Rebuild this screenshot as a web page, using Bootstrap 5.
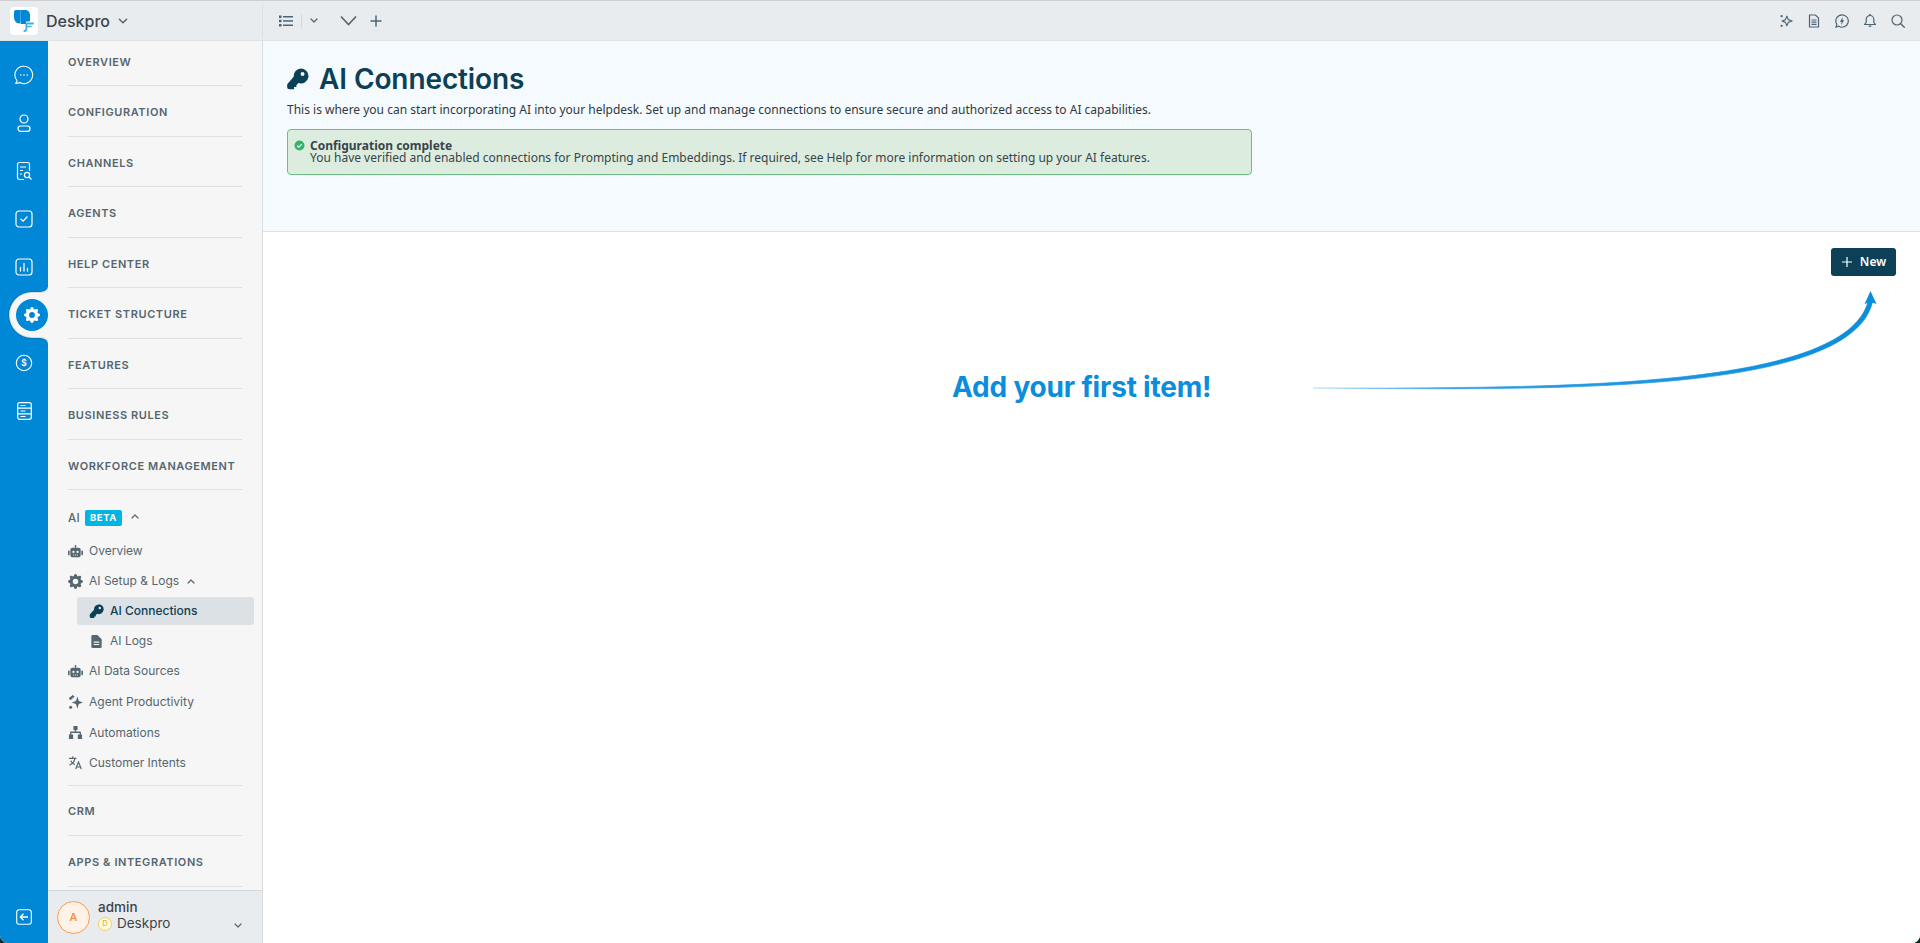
<!DOCTYPE html>
<html lang="en">
<head>
<meta charset="utf-8">
<title>AI Connections</title>
<link rel="stylesheet" href="https://cdn.jsdelivr.net/npm/bootstrap@5.3.0/dist/css/bootstrap.min.css">
<style>
html,body{height:100%;}
body{background:#0d2a22;overflow:hidden;font-family:"Inter","Liberation Sans",sans-serif;}
.app-frame{height:943px;background:#fff;border-bottom-left-radius:8px;border-bottom-right-radius:8px;overflow:hidden;display:flex;flex-direction:column;}
.top-strip{height:41px;flex:none;background:#e9ecef;border-top:1px solid #cfcfcf;border-bottom:1px solid #dfe3e6;color:#4f6472;}
.brand-zone{width:262px;flex:none;padding-left:10px;}
.logo-tile{width:28px;height:28px;background:#fff;border-radius:4px;}
.brand-name{font-size:16px;font-weight:500;color:#3c4449;margin-left:8px;}
.tool-divider{width:1px;height:14px;background:#d3d8dc;}
.v-divider{width:1px;height:34px;background:#dde1e4;}
.chev-big{margin-left:22px;}
.plus-mark{margin-left:13px;}
.right-tools{gap:14px;padding-right:15px;}
.slot{display:flex;align-items:center;justify-content:center;}
.page-body{flex:1;min-height:0;}
.rail{width:48px;flex:none;background:#0088d6;color:#fff;padding-top:10px;}
.rail-item{height:48px;position:relative;}
.rail-tab{position:absolute;left:0;top:-10px;width:48px;height:68px;}
.gear-on{position:relative;left:8px;color:#fff;}
.rail-foot{height:52px;}
.side-col{width:215px;flex:none;background:#f6f6f6;border-right:1px solid #d9dde0;}
.side-scroll{flex:1;min-height:0;padding:0 20px;}
.sec-head{height:50.55px;border-bottom:1px solid #dde1e6;display:flex;align-items:flex-start;padding-top:18px;font-size:11px;font-weight:600;letter-spacing:.6px;color:#55666f;line-height:16px;white-space:nowrap;}
.sec-head.first{height:45px;padding-top:13px;}
.ai-head{height:46px;padding-top:20px;font-size:11.5px;font-weight:500;color:#55666f;line-height:16px;letter-spacing:.3px;display:flex;align-items:flex-start;}
.beta-tag{background:#00b4e4;color:#fff;font-size:9.5px;font-weight:700;letter-spacing:.6px;border-radius:2px;padding:0 5px;height:16px;line-height:16px;margin:0 9px 0 5px;}
.nav-line{height:30px;display:flex;align-items:center;font-size:12px;color:#55666f;white-space:nowrap;}
.nav-line.tall{height:31.5px;}
.nav-ico{width:15px;height:15px;margin-right:6px;flex:none;color:#55666f;}
.sub-line{margin:0 -12px 0 9px;padding-left:12px;height:30px;}
.sub-line.current{height:28px;margin-top:1px;margin-bottom:1px;background:#dce1e5;border-radius:3px;color:#0c4056;font-weight:500;}
.sub-line.current .nav-ico{color:#0c4056;}
.mini-caret{margin-left:8px;color:#55666f;}
.divider-wrap{border-top:1px solid #dde1e6;margin-top:7px;}
.crm-head{height:50.5px;padding-top:17px;}
.foot-bar{height:53px;flex:none;background:#e9ecef;border-top:1px solid #d5d9dc;padding-left:9px;position:relative;}
.avatar-ring{width:33px;height:33px;border-radius:50%;border:1px solid #f59a4f;background:#fff3e8;color:#f08a3c;font-size:11px;font-weight:500;}
.foot-text{margin-bottom:3px;}
.foot-name{font-size:13.5px;font-weight:500;color:#3c4449;line-height:16px;}
.foot-org{font-size:13.5px;color:#3c4449;line-height:17px;}
.org-dot{width:14px;height:14px;border-radius:50%;border:1px solid #f4d35e;background:#fff9dd;color:#d5ae2c;font-size:7.5px;margin-right:5px;}
.foot-caret{position:absolute;right:20px;bottom:15px;color:#55666f;}
.main-pane{flex:1;min-width:0;position:relative;background:#fff;}
.hero{height:191px;background:#f5faff;border-bottom:1px solid #dde2e6;padding:20px 24px 0;}
.hero-title{font-family:"Inter","Roboto",sans-serif;font-size:28px;font-weight:600;line-height:36px;color:#0c4056;margin:0;letter-spacing:-.1px;}
.hero-key{width:23px;height:23px;margin-left:-1px;margin-right:10px;color:#0c4056;flex:none;}
.hero-text{font-family:"Noto Sans",sans-serif;font-size:12px;line-height:18px;color:#2f3a40;margin:4px 0 0;}
.note-box{width:965px;height:46px;margin-top:10px;background:#dcede0;border:1px solid #6bbf85;border-radius:4px;padding:10px 0 0 6px;font-family:"Noto Sans",sans-serif;font-size:12px;line-height:12px;color:#3a4448;}
.note-title{font-weight:700;}
.note-ico{width:11px;height:11px;margin-right:5px;flex:none;}
.action-row{padding:16px 24px 0 0;}
.new-btn{width:65px;height:28px;padding:0 0 0 1px;background:#0c4056;border:0;border-radius:3px;color:#fff;font-family:"Noto Sans",sans-serif;font-size:12px;font-weight:600;display:flex;align-items:center;justify-content:center;gap:8px;}
.new-btn:hover{background:#0c4056;color:#fff;}
.empty-call{position:absolute;left:689px;top:329px;font-family:"Inter","Roboto",sans-serif;font-size:28px;font-weight:700;line-height:34px;color:#0a8ddb;margin:0;letter-spacing:-.2px;white-space:nowrap;}
.arrow-art{position:absolute;left:1040px;top:249px;width:620px;height:120px;}
</style>
</head>
<body>
<svg width="0" height="0" class="d-none">
<defs>
<symbol id="i-gear" viewBox="0 0 16 16"><path fill="currentColor" d="M9.405 1.05c-.413-1.4-2.397-1.4-2.81 0l-.1.34a1.464 1.464 0 0 1-2.105.872l-.31-.17c-1.283-.698-2.686.705-1.987 1.987l.169.311c.446.82.023 1.841-.872 2.105l-.34.1c-1.4.413-1.4 2.397 0 2.81l.34.1a1.464 1.464 0 0 1 .872 2.105l-.17.31c-.698 1.283.705 2.686 1.987 1.987l.311-.169a1.464 1.464 0 0 1 2.105.872l.1.34c.413 1.4 2.397 1.4 2.81 0l.1-.34a1.464 1.464 0 0 1 2.105-.872l.31.17c1.283.698 2.686-.705 1.987-1.987l-.169-.311a1.464 1.464 0 0 1 .872-2.105l.34-.1c1.4-.413 1.4-2.397 0-2.81l-.34-.1a1.464 1.464 0 0 1-.872-2.105l.17-.31c.698-1.283-.705-2.686-1.987-1.987l-.311.169a1.464 1.464 0 0 1-2.105-.872l-.1-.34zM8 10.93a2.929 2.929 0 1 1 0-5.86 2.929 2.929 0 0 1 0 5.858z"/></symbol>
<symbol id="i-key" viewBox="0 0 20 20"><path fill="currentColor" fill-rule="evenodd" d="M13 .5a6.500 6.500 0 1 1-2.200 12.600L9 14.900V16.500H7v2H3a2 2 0 0 1-2-2v-1.700c0-.5.2-1 .6-1.400l5.100-5.900A6.500 6.500 0 0 1 13 .5zm1.400 3a1.700 1.700 0 1 0 0 3.400 1.700 1.700 0 0 0 0-3.400z"/></symbol>
<symbol id="i-robot" viewBox="0 0 16 16"><path fill="currentColor" fill-rule="evenodd" d="M8 1a1 1 0 0 1 .6 1.800V4h2.900A2 2 0 0 1 13.500 6v6a2 2 0 0 1-2 2h-7a2 2 0 0 1-2-2V6a2 2 0 0 1 2-2h2.900V2.800A1 1 0 0 1 8 1zM5.800 7.200a1.200 1.200 0 1 0 0 2.400 1.200 1.200 0 0 0 0-2.400zm4.400 0a1.200 1.200 0 1 0 0 2.400 1.200 1.200 0 0 0 0-2.400zM5.500 11.300v1h1v-1zm2 0v1h1v-1zm2 0v1h1v-1z"/><rect x="0" y="7" width="1.700" height="5" rx=".7" fill="currentColor"/><rect x="14.300" y="7" width="1.700" height="5" rx=".7" fill="currentColor"/></symbol>
<symbol id="i-doc" viewBox="0 0 16 16"><path fill="currentColor" fill-rule="evenodd" d="M4 1h5l4.500 4.500V13.500A1.500 1.500 0 0 1 12 15H4a1.500 1.500 0 0 1-1.500-1.500v-11A1.500 1.500 0 0 1 4 1zm1 7v1.200h6V8zm0 2.600v1.200h6v-1.200z"/></symbol>
<symbol id="i-spark" viewBox="0 0 16 16"><path fill="currentColor" d="M10 1.500l1.500 5L16 8l-4.500 1.500-1.500 5-1.500-5L4 8l4.500-1.500z"/><circle cx="2.800" cy="3.500" r="1.600" fill="currentColor"/><circle cx="2.800" cy="13" r="1.600" fill="currentColor"/><path stroke="currentColor" stroke-width="1.200" d="M5 0v3.500M3.200 1.700h3.600"/></symbol>
<symbol id="i-org" viewBox="0 0 16 16"><path fill="currentColor" d="M5.800 1h4.400v4.400H8.700V7h4.100a1 1 0 0 1 1 1v2H15v5h-4.500v-5h1.900V8.500H3.600V10h1.900v5H1v-5h1.200V8a1 1 0 0 1 1-1h4.100V5.400H5.800z"/></symbol>
<symbol id="i-lang" viewBox="0 0 16 16"><path fill="none" stroke="currentColor" stroke-width="1.300" d="M1 3.500h8M5 1.500v2M7.500 3.500C6.800 6.800 4.400 9.500 1.500 11M3 6c.8 1.900 2.400 3.400 4.200 4.300M8.200 15l3-7.500 3 7.500M9.300 12.800h3.900"/></symbol>
<symbol id="i-up" viewBox="0 0 8 5"><path fill="none" stroke="currentColor" stroke-width="1.200" stroke-linecap="round" stroke-linejoin="round" d="M1 4l3-3 3 3"/></symbol>
<symbol id="i-down" viewBox="0 0 8 5"><path fill="none" stroke="currentColor" stroke-width="1.200" stroke-linecap="round" stroke-linejoin="round" d="M1 1l3 3 3-3"/></symbol>
</defs>
</svg>

<div class="app-frame">
  <header class="top-strip d-flex align-items-center">
    <div class="brand-zone d-flex align-items-center">
      <div class="logo-tile slot">
        <svg width="24" height="24" viewBox="0 0 24 24" aria-hidden="true">
          <path fill="#0088d6" d="M2 3a2 2 0 0 1 2-2h4.500v9c0 2.500 0 4-1.500 4.500C4 14.500 2 11.500 2 8z"/>
          <path fill="#0088d6" d="M8.500 1H13c3 0 5 2 5 5v5c0 1-.5 1.500-1.500 1.500H14V15H8.500z"/>
          <path fill="none" stroke="#45aee8" stroke-width="1.800" stroke-linecap="round" d="M21 14.500h-5.500c-1.300 0-1.300 1-1.100 2.500.2 2 .3 3.500-.6 4.500-.4.400-1 .5-1.500.5"/>
          <path stroke="#45aee8" stroke-width="1.500" stroke-linecap="round" d="M15 17.500h4"/>
        </svg>
      </div>
      <span class="brand-name">Deskpro</span>
      <svg class="ms-2" width="10" height="6" aria-hidden="true"><use href="#i-down"/></svg>
    </div>
    <div class="v-divider"></div>
    <div class="d-flex align-items-center flex-grow-1 ps-3">
      <svg width="14" height="12" viewBox="0 0 14 12" fill="currentColor" aria-hidden="true"><rect x="0" y="0.500" width="2.500" height="2.500"/><rect x="0" y="4.700" width="2.500" height="2.500"/><rect x="0" y="9" width="2.500" height="2.500"/><rect x="4" y="1" width="10" height="1.500"/><rect x="4" y="5.200" width="10" height="1.500"/><rect x="4" y="9.500" width="10" height="1.500"/></svg>
      <span class="tool-divider ms-2"></span>
      <svg class="ms-2" width="8" height="5" aria-hidden="true"><use href="#i-down"/></svg>
      <svg class="chev-big" width="17" height="11" viewBox="0 0 17 11" aria-hidden="true"><path fill="none" stroke="currentColor" stroke-width="1.600" d="M1 1.500l7.500 8 7.500-8"/></svg>
      <svg class="plus-mark" width="12" height="12" viewBox="0 0 12 12" aria-hidden="true"><path stroke="currentColor" stroke-width="1.500" d="M6 .500v11M.5 6h11"/></svg>
    </div>
    <div class="right-tools d-flex align-items-center">
      <svg width="14" height="14" viewBox="0 0 16 16" aria-hidden="true"><path fill="none" stroke="currentColor" stroke-width="1.300" stroke-linejoin="round" d="M9 2.500l1.600 3.900L15 8l-4.400 1.600L9 13.500 7.400 9.600 3.500 8l3.900-1.600z"/><circle cx="3" cy="2.500" r="1.300" fill="currentColor"/><circle cx="3" cy="13.500" r="1.300" fill="currentColor"/></svg>
      <svg width="14" height="14" viewBox="0 0 14 14" aria-hidden="true"><path fill="none" stroke="currentColor" stroke-width="1.200" d="M2.500 1h6l3 3v9h-9zM4.500 6h5M4.500 8.200h5M4.500 10.400h5"/></svg>
      <svg width="14" height="14" viewBox="0 0 14 14" aria-hidden="true"><path fill="none" stroke="currentColor" stroke-width="1.200" d="M7 .8a6.200 6.200 0 1 1-3.300 11.400L1 13l.8-2.700A6.200 6.200 0 0 1 7 .8z"/><path fill="currentColor" d="M8 3L4.800 7.800h1.800L6 11l3.200-4.800H7.400z"/></svg>
      <svg width="14" height="14" viewBox="0 0 14 14" aria-hidden="true"><path fill="none" stroke="currentColor" stroke-width="1.200" stroke-linejoin="round" d="M7 1.500a3.800 3.800 0 0 1 3.800 3.800v3l1.700 2.200h-11l1.700-2.200v-3A3.800 3.800 0 0 1 7 1.500z"/><path fill="currentColor" d="M5.500 11.500h3a1.500 1.500 0 0 1-3 0zM6.200 0h1.600v1.500H6.200z"/></svg>
      <svg width="14" height="14" viewBox="0 0 14 14" aria-hidden="true"><circle cx="6" cy="6" r="5" fill="none" stroke="currentColor" stroke-width="1.200"/><path stroke="currentColor" stroke-width="1.300" d="M9.700 9.700l4 4"/></svg>
    </div>
  </header>

  <div class="page-body d-flex">
    <nav class="rail d-flex flex-column" aria-label="Sections">
      <div class="rail-item slot"><svg width="20" height="20" viewBox="0 0 20 20" aria-hidden="true"><path fill="none" stroke="#fff" stroke-width="1.100" d="M10 1.200a8.700 8.700 0 1 1-4.300 16.300c-1.100.7-2.700.9-3.900.7.700-.7 1.100-1.500 1.200-2.700A8.700 8.700 0 0 1 10 1.200z"/><circle cx="6.800" cy="10" r=".8" fill="#fff"/><circle cx="10" cy="10" r=".8" fill="#fff"/><circle cx="13.200" cy="10" r=".8" fill="#fff"/></svg></div>
      <div class="rail-item slot"><svg width="20" height="20" viewBox="0 0 20 20" aria-hidden="true"><circle cx="10" cy="6" r="4" fill="none" stroke="#fff" stroke-width="1.200"/><rect x="4" y="13" width="12" height="5.400" rx="2.700" fill="none" stroke="#fff" stroke-width="1.200"/></svg></div>
      <div class="rail-item slot"><svg width="20" height="20" viewBox="0 0 20 20" aria-hidden="true"><path fill="none" stroke="#fff" stroke-width="1.200" d="M10 18.500H5.500a2 2 0 0 1-2-2v-13a2 2 0 0 1 2-2h8a2 2 0 0 1 2 2v6.500"/><path stroke="#fff" stroke-width="1.200" d="M6 6h6M6 9.500h3M6 13h2"/><circle cx="13" cy="14" r="2.600" fill="none" stroke="#fff" stroke-width="1.200"/><path stroke="#fff" stroke-width="1.200" d="M15 16l2.500 2.500"/></svg></div>
      <div class="rail-item slot"><svg width="18" height="18" viewBox="0 0 18 18" aria-hidden="true"><rect x="1" y="1" width="16" height="16" rx="3" fill="none" stroke="#fff" stroke-width="1.200"/><path fill="none" stroke="#fff" stroke-width="1.300" stroke-linecap="round" d="M6 9.200l2.100 2L12 7"/></svg></div>
      <div class="rail-item slot"><svg width="18" height="18" viewBox="0 0 18 18" aria-hidden="true"><rect x="1" y="1" width="16" height="16" rx="3" fill="none" stroke="#fff" stroke-width="1.200"/><path stroke="#fff" stroke-width="1.300" stroke-linecap="round" d="M5.500 13V9.500M9 13V5.500M12.500 13v-2.500"/></svg></div>
      <div class="rail-item slot">
        <svg class="rail-tab" viewBox="0 0 48 68" aria-hidden="true">
          <path fill="#f6f6f6" d="M48 4c0 5-3 6-7 7H32a22 22 0 0 0 0 46h9c4 1 7 2 7 7z"/>
          <path fill="none" stroke="#000" stroke-opacity=".1" stroke-width="2" d="M48 4c0 5-3 6-7 7H32a22 22 0 0 0 0 46h9c4 1 7 2 7 7"/>
          <circle cx="32" cy="34" r="16" fill="#0088d6"/>
        </svg>
        <svg class="gear-on" width="16" height="16" aria-hidden="true"><use href="#i-gear"/></svg>
      </div>
      <div class="rail-item slot"><svg width="18" height="18" viewBox="0 0 18 18" aria-hidden="true"><circle cx="9" cy="9" r="7.700" fill="none" stroke="#fff" stroke-width="1.100"/><text x="9" y="12" text-anchor="middle" font-family="Inter,sans-serif" font-size="8.500" font-weight="600" fill="#fff">$</text></svg></div>
      <div class="rail-item slot"><svg width="15" height="18" viewBox="0 0 15 18" aria-hidden="true"><rect x=".7" y=".7" width="13.600" height="16.600" rx="2" fill="none" stroke="#fff" stroke-width="1.200"/><path stroke="#fff" stroke-width="1.200" d="M.7 6.200h13.600M.7 11.800h13.600M3.500 3.500h5M3.500 9h5M3.500 14.500h5"/></svg></div>
      <div class="mt-auto slot rail-foot">
        <svg width="16" height="16" viewBox="0 0 16 16" aria-hidden="true"><rect x=".7" y=".7" width="14.600" height="14.600" rx="2.500" fill="none" stroke="#fff" stroke-width="1.100"/><path fill="none" stroke="#fff" stroke-width="1.300" d="M12 8H4.500M7.500 4.800L4.300 8l3.200 3.200"/></svg>
      </div>
    </nav>

    <aside class="side-col d-flex flex-column">
      <div class="side-scroll overflow-hidden">
        <div class="sec-head first">OVERVIEW</div>
        <div class="sec-head">CONFIGURATION</div>
        <div class="sec-head">CHANNELS</div>
        <div class="sec-head">AGENTS</div>
        <div class="sec-head">HELP CENTER</div>
        <div class="sec-head">TICKET STRUCTURE</div>
        <div class="sec-head">FEATURES</div>
        <div class="sec-head">BUSINESS RULES</div>
        <div class="sec-head">WORKFORCE MANAGEMENT</div>
        <div class="ai-head">AI<span class="beta-tag">BETA</span><svg class="mt-1" width="8" height="5" aria-hidden="true"><use href="#i-up"/></svg></div>
        <div class="nav-line"><svg class="nav-ico" aria-hidden="true"><use href="#i-robot"/></svg>Overview</div>
        <div class="nav-line"><svg class="nav-ico" aria-hidden="true"><use href="#i-gear"/></svg>AI Setup &amp; Logs<svg class="mini-caret" width="8" height="5" aria-hidden="true"><use href="#i-up"/></svg></div>
        <div class="nav-line sub-line current"><svg class="nav-ico" aria-hidden="true"><use href="#i-key"/></svg>AI Connections</div>
        <div class="nav-line sub-line"><svg class="nav-ico" aria-hidden="true"><use href="#i-doc"/></svg>AI Logs</div>
        <div class="nav-line"><svg class="nav-ico" aria-hidden="true"><use href="#i-robot"/></svg>AI Data Sources</div>
        <div class="nav-line tall"><svg class="nav-ico" aria-hidden="true"><use href="#i-spark"/></svg>Agent Productivity</div>
        <div class="nav-line"><svg class="nav-ico" aria-hidden="true"><use href="#i-org"/></svg>Automations</div>
        <div class="nav-line"><svg class="nav-ico" aria-hidden="true"><use href="#i-lang"/></svg>Customer Intents</div>
        <div class="divider-wrap"></div>
        <div class="sec-head crm-head">CRM</div>
        <div class="sec-head">APPS &amp; INTEGRATIONS</div>
      </div>
      <div class="foot-bar d-flex align-items-center">
        <div class="avatar-ring slot">A</div>
        <div class="ms-2 foot-text">
          <div class="foot-name">admin</div>
          <div class="foot-org d-flex align-items-center"><span class="org-dot slot">D</span>Deskpro</div>
        </div>
        <svg class="foot-caret" width="8" height="5" aria-hidden="true"><use href="#i-down"/></svg>
      </div>
    </aside>

    <main class="main-pane">
      <section class="hero">
        <h1 class="hero-title d-flex align-items-center"><svg class="hero-key" aria-hidden="true"><use href="#i-key"/></svg>AI Connections</h1>
        <p class="hero-text">This is where you can start incorporating AI into your helpdesk. Set up and manage connections to ensure secure and authorized access to AI capabilities.</p>
        <div class="note-box d-flex">
          <svg class="note-ico" viewBox="0 0 11 11" aria-hidden="true"><circle cx="5.500" cy="5.500" r="5" fill="#36b36b"/><path fill="none" stroke="#fff" stroke-width="1.300" d="M3.200 5.600l1.600 1.500 3-3"/></svg>
          <div><div class="note-title">Configuration complete</div><div>You have verified and enabled connections for Prompting and Embeddings. If required, see Help for more information on setting up your AI features.</div></div>
        </div>
      </section>
      <div class="action-row d-flex justify-content-end">
        <button type="button" class="btn new-btn"><svg width="10" height="10" viewBox="0 0 10 10" aria-hidden="true"><path stroke="#fff" stroke-width="1.200" d="M5 0v10M0 5h10"/></svg>New</button>
      </div>
      <h2 class="empty-call">Add your first item!</h2>
      <svg class="arrow-art" viewBox="0 0 620 120" aria-hidden="true">
        <defs><linearGradient id="arrowFade" gradientUnits="userSpaceOnUse" x1="10" x2="569" y1="0" y2="0"><stop offset="0" stop-color="#7cc4ee" stop-opacity=".5"/><stop offset=".25" stop-color="#2a9ee2"/><stop offset="1" stop-color="#0a8ddb"/></linearGradient></defs>
        <path fill="url(#arrowFade)" stroke="url(#arrowFade)" stroke-width=".7" d="M10 98C250 98 540 100 565 12h4.500C547 105 250 100 10 98z"/>
        <path fill="#0a8ddb" d="M567.500 1l6 13-6-2-6 2z"/>
      </svg>
    </main>
  </div>
</div>
</body>
</html>
